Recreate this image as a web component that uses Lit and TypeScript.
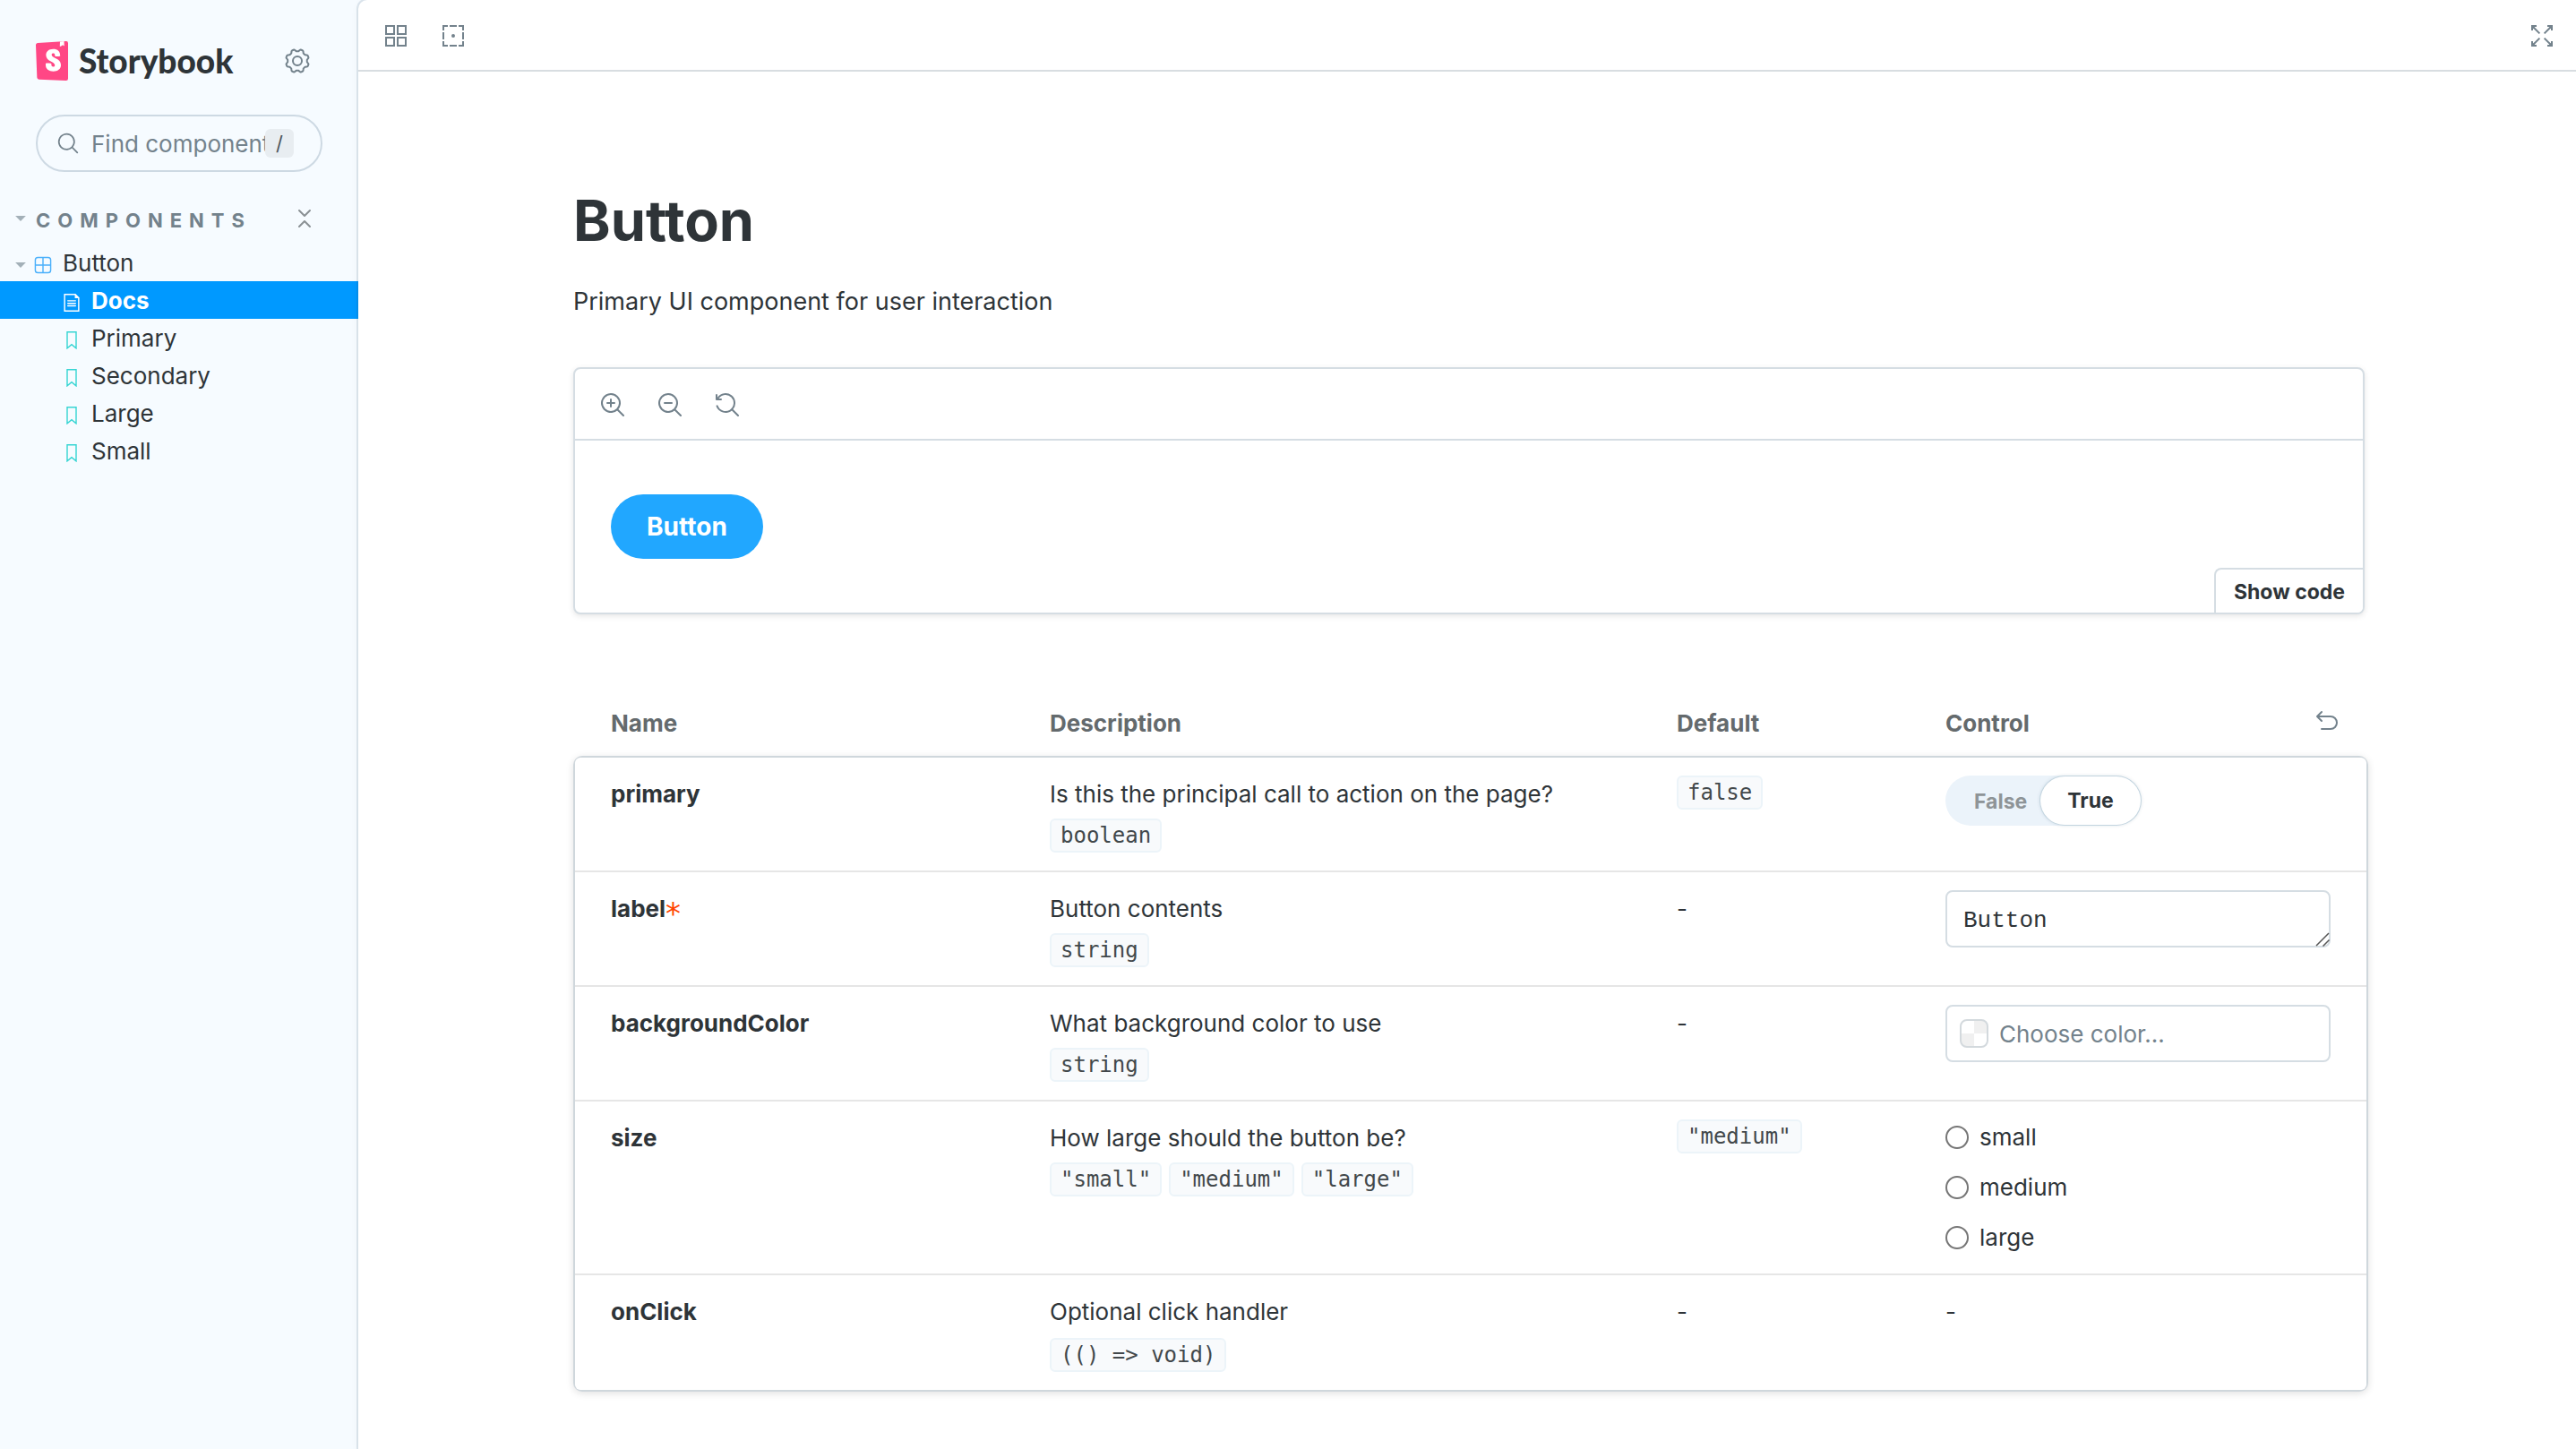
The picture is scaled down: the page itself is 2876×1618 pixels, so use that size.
import { LitElement, html, svg, css } from "lit";
import { customElement, state } from "lit/decorators.js";

const ZOOM_LENS =
  "M9.544 10.206a5.5 5.5 0 11.662-.662.5.5 0 01.148.102l3 3a.5.5 0 01-.708.708l-3-3a.5.5 0 01-.102-.148zM10.5 6a4.5 4.5 0 11-9 0 4.5 4.5 0 019 0z";

/* Eight-toothed cog outline, centred in a 14 unit box. */
const cogPath = (): string => {
  const points: string[] = [];
  for (let i = 0; i < 128; i++) {
    const a = (i / 128) * Math.PI * 2;
    const wave = Math.max(-1, Math.min(1, -Math.cos(a * 8) * 1.7));
    const r = 5.95 + wave * 0.55;
    points.push(`${(7 + r * Math.sin(a)).toFixed(2)} ${(7 - r * Math.cos(a)).toFixed(2)}`);
  }
  return `M${points.join("L")}Z`;
};

const icons = {
  grid: svg`<path fill="none" stroke="currentColor" d="M1.5 1.5H6V6H1.5zM8 1.5h4.5V6H8zM1.5 8H6v4.5H1.5zM8 8h4.5v4.5H8z"/>`,
  outline: svg`<path d="M4 2V1H1v3h1V2h2zM1 9h1V5H1v4zM2 10v2h2v1H1v-3h1zM10 13h3v-3h-1v2h-2v1zM12 4h1V1h-3v1h2v2zM9 12v1H5v-1h4zM9 1v1H5V1h4zM13 9h-1V5h1v4zM8 7a1 1 0 11-2 0 1 1 0 012 0z"/>`,
  expand: svg`<path fill="none" stroke="currentColor" d="M1.5 4V1.5H4M1.5 1.5L5.7 5.7M10 1.5h2.5V4M12.5 1.5L8.3 5.7M1.5 10v2.5H4M1.5 12.5L5.7 8.3M10 12.5h2.5V10M12.5 12.5L8.3 8.3"/><path d="M1 1h3L1 4zM13 1v3l-3-3zM1 13v-3l3 3zM13 13h-3l3-3z"/>`,
  search: svg`<path fill-rule="evenodd" d=${ZOOM_LENS}/>`,
  zoomIn: svg`<path fill-rule="evenodd" d=${ZOOM_LENS}/><path d="M6 3.5a.5.5 0 01.5.5v1.5H8a.5.5 0 010 1H6.5V8a.5.5 0 01-1 0V6.5H4a.5.5 0 010-1h1.5V4a.5.5 0 01.5-.5z"/>`,
  zoomOut: svg`<path fill-rule="evenodd" d=${ZOOM_LENS}/><path d="M4 5.5a.5.5 0 000 1h4a.5.5 0 000-1H4z"/>`,
  zoomReset: svg`<path d="M1.5 2.837V1.5a.5.5 0 00-1 0V4a.5.5 0 00.5.5h2.5a.5.5 0 000-1H2.258a4.5 4.5 0 11-.496 4.016.5.5 0 10-.942.337 5.502 5.502 0 008.724 2.353.5.5 0 00.102.148l3 3a.5.5 0 00.708-.708l-3-3a.5.5 0 00-.148-.102A5.5 5.5 0 101.5 2.837z"/>`,
  undo: svg`<path fill="none" stroke="currentColor" stroke-linecap="round" stroke-linejoin="round" d="M4 2.5L1.5 5L4 7.5M1.5 5H9a3.5 3.5 0 010 7H4"/>`,
  cog: svg`<path fill="none" stroke="currentColor" stroke-linejoin="round" d=${cogPath()}/><circle cx="7" cy="7" r="2.5" fill="none" stroke="currentColor"/>`,
  collapse: svg`<path fill="none" stroke="currentColor" stroke-linecap="round" stroke-linejoin="round" d="M4 2.5l3 3 3-3M4 11.5l3-3 3 3"/>`,
  component: svg`<rect x="1" y="1" width="12" height="12" rx="2" fill="none" stroke="currentColor"/><path fill="none" stroke="currentColor" d="M7 1v12M1 7h12"/>`,
  doc: svg`<path fill="none" stroke="currentColor" d="M1.5.5h8.3l2.7 2.7v10.3h-11z"/><path d="M9.500 0v3.500H13z"/><path fill="none" stroke="currentColor" stroke-linecap="round" d="M4 5.500h6M4 7.500h6M4 9.500h6"/>`,
  bookmark: svg`<path fill="none" stroke="currentColor" d="M3.5.5h7v12.7L7 10.3l-3.500 2.900z"/>`,
};

const icon = (name: keyof typeof icons, extra = "") =>
  html`<svg class="icon ${extra}" viewBox="0 0 14 14" fill="currentColor" aria-hidden="true">${icons[name]}</svg>`;

interface ArgRow {
  name: string;
  required?: boolean;
  description: string;
  types: string[];
  signature?: boolean;
  fallback?: string;
  control?: "boolean" | "text" | "color" | "radio";
}

const ROWS: ArgRow[] = [
  { name: "primary", description: "Is this the principal call to action on the page?", types: ["boolean"], fallback: "false", control: "boolean" },
  { name: "label", required: true, description: "Button contents", types: ["string"], control: "text" },
  { name: "backgroundColor", description: "What background color to use", types: ["string"], control: "color" },
  { name: "size", description: "How large should the button be?", types: ['"small"', '"medium"', '"large"'], fallback: '"medium"', control: "radio" },
  { name: "onClick", description: "Optional click handler", types: ["(() => void)"], signature: true },
];

const base = css`
  * { box-sizing: border-box; }
  button, input, textarea { font: inherit; color: inherit; margin: 0; }
  button { border: 0; padding: 0; background: none; cursor: pointer; }
  .icon { display: block; flex: none; width: 28px; height: 28px; }
  .hidden {
    position: absolute; width: 1px; height: 1px; overflow: hidden;
    clip-path: inset(50%); white-space: nowrap;
  }
`;

@customElement("story-sidebar")
export class StorySidebar extends LitElement {
  static styles = [base, css`
    :host { display: block; background: #f6fbff; }
    .head { display: flex; align-items: center; justify-content: space-between; padding: 46px 54px 0 40px; }
    .brand { display: flex; align-items: center; gap: 12px; color: #2e3438; text-decoration: none; }
    .mark { display: block; width: 36px; height: 44px; }
    .word { font: 900 37px/44px Lato, sans-serif; }
    .gear { color: #73828c; }
    .search {
      display: flex; align-items: center; height: 64px; margin: 38px 40px 0; padding: 0 30px 0 22px;
      border: 2px solid #cdd9e3; border-radius: 32px; color: #73828c;
    }
    .lens { width: 24px; height: 24px; }
    .field { flex: 1; min-width: 0; height: 40px; margin-left: 14px; padding: 2px 0 0; border: 0; outline: 0; background: none; }
    .field::placeholder { color: #73828c; opacity: 1; }
    .key { width: 32px; height: 32px; border-radius: 6px; background: #e8edf1; color: #4c5459; font: 22px/32px Inter, sans-serif; text-align: center; }
    .group { display: flex; align-items: center; justify-content: space-between; height: 40px; margin-top: 34px; padding: 0 46px 0 16px; color: #73828c; }
    .toggle { display: flex; align-items: center; gap: 10px; font-size: 22px; font-weight: 700; letter-spacing: 8px; }
    .toggle .caret { margin-bottom: 4px; }
    .caret { flex: none; width: 14px; height: 6px; background: #a3b0b8; clip-path: polygon(8% 0, 92% 0, 50% 100%); }
    .collapse { margin-bottom: 4px; color: #8a9094; }
    .tree { margin: 6px 0 0; padding: 0; list-style: none; }
    .node {
      display: flex; align-items: center; height: 42px; padding: 2px 0 0 70px;
      color: #2e3438; text-decoration: none;
    }
    .parent { padding-left: 16px; width: 100%; }
    .parent .caret { margin-top: 4px; }
    .kind { width: 20px; height: 20px; margin: 4px 12px 0 0; }
    .parent .kind { margin-left: 8px; color: #4bb0fb; }
    .leaf .kind { color: #37d5d3; }
    .selected { background: #0099ff; color: #fff; font-weight: 700; }
    .selected .icon.kind { color: #fff; }
  `];

  @state() private selected = "Docs";

  private pick(event: Event, name: string) {
    event.preventDefault();
    this.selected = name;
  }

  render() {
    return html`
      <div class="head">
        <a class="brand" href="#">
          <svg class="mark" viewBox="0 0 32 40" preserveAspectRatio="none" aria-hidden="true">
            <path fill="#ff4785" d="M1.200 36.900L0 3.900c0-1.100.8-2 1.900-2.100l28-1.800a2 2 0 012.100 2v36a2 2 0 01-2 2L3.200 38.800a2 2 0 01-2-1.900z"/>
            <path fill="#fff" d="M18.900 15.100c0 .7 4.700.3 5.300-.2 0-4.600-2.500-7-7-7s-7.100 2.500-7.100 6.300c0 6.500 8.800 6.600 8.800 10.200 0 1-.5 1.600-1.600 1.600-1.400 0-2-.7-1.900-3.200 0-.5-5.500-.7-5.600 0-.5 6 3.300 7.800 7.600 7.800 4.200 0 7.500-2.300 7.500-6.300 0-7.200-9.200-7-9.200-10.400 0-1.400 1-1.600 1.700-1.600.6 0 1.700.1 1.500 2.800z"/>
            <path fill="#fff" d="M23.800 5.200L24 .4l4-.3.2 4.900-1.500-1.200-1.900 1.400z"/>
          </svg>
          <span class="word">Storybook</span>
        </a>
        <button class="gear" type="button" aria-label="Settings">${icon("cog")}</button>
      </div>
      <label class="search">
        <span class="hidden">Find components</span>
        ${icon("search", "lens")}
        <input class="field" type="text" placeholder="Find components" />
        <span class="key">/</span>
      </label>
      <div class="group">
        <button class="toggle" type="button"><span class="caret"></span>COMPONENTS</button>
        <button class="collapse" type="button" aria-label="Collapse all">${icon("collapse")}</button>
      </div>
      <ul class="tree">
        <li><button class="node parent" type="button"><span class="caret"></span>${icon("component", "kind")}Button</button></li>
        ${["Docs", "Primary", "Secondary", "Large", "Small"].map(
          (name) => html`<li>
            <a class="node leaf ${name === this.selected ? "selected" : ""}" href="#" @click=${(e: Event) => this.pick(e, name)}>
              ${icon(name === "Docs" ? "doc" : "bookmark", "kind")}${name}
            </a>
          </li>`
        )}
      </ul>
    `;
  }
}

@customElement("story-preview")
export class StoryPreview extends LitElement {
  static styles = [base, css`
    :host { display: block; }
    .card { border: 2px solid #d5dde3; border-radius: 8px; background: #fff; box-shadow: 0 2px 6px rgba(0, 0, 0, 0.1); }
    .tools { display: flex; align-items: center; gap: 36px; height: 80px; padding: 2px 28px 0; border-bottom: 2px solid #d5dde3; color: #73828c; }
    .stage { position: relative; padding: 60px 40px; }
    .demo { display: block; height: 72px; padding: 0 40px; border-radius: 36px; background: #21a7ff; color: #fff; font-size: 28px; font-weight: 700; line-height: 28px; }
    .code {
      position: absolute; right: 0; bottom: 0; padding: 10px 20px 8px 20px; background: #fff;
      border: solid #d5dde3; border-width: 2px 0 0 2px; border-radius: 8px 0 6px 0;
      font-size: 23px; font-weight: 700; line-height: 30px;
    }
  `];

  render() {
    return html`
      <section class="card">
        <div class="tools">
          <button type="button" aria-label="Zoom in">${icon("zoomIn")}</button>
          <button type="button" aria-label="Zoom out">${icon("zoomOut")}</button>
          <button type="button" aria-label="Reset zoom">${icon("zoomReset")}</button>
        </div>
        <div class="stage">
          <button class="demo" type="button">Button</button>
          <button class="code" type="button">Show code</button>
        </div>
      </section>
    `;
  }
}

@customElement("args-table")
export class ArgsTable extends LitElement {
  static styles = [base, css`
    :host { display: block; padding-left: 2px; }
    .wrap { margin-right: -2px; }
    .table { width: 100%; table-layout: fixed; border-collapse: separate; border-spacing: 0; line-height: 42px; }
    .w25 { width: 25%; }
    .w35 { width: 35%; }
    .w15 { width: 15%; }
    th, td { text-align: left; vertical-align: top; }
    .table thead th { height: 60px; padding: 1px 30px 17px; color: #646a6d; font-weight: 700; }
    .table tbody th, .table tbody td { padding: 20px 30px; border-top: 2px solid #e6e6e6; background: #fff; }
    .table tbody tr:first-child > * { border-top: 0; }
    .table tr > :first-child { padding-left: 40px; }
    .table tr > :last-child { padding-right: 40px; }
    .table tbody { border-radius: 8px; box-shadow: 0 0 0 2px #cfd7dc, 0 2px 8px 2px rgba(0, 0, 0, 0.12); }
    .table tbody tr:first-child > :first-child { border-top-left-radius: 6px; }
    .table tbody tr:first-child > :last-child { border-top-right-radius: 6px; }
    .table tbody tr:last-child > :first-child { border-bottom-left-radius: 6px; }
    .table tbody tr:last-child > :last-child { border-bottom-right-radius: 6px; }
    .last { display: flex; align-items: center; justify-content: space-between; }
    .undo { margin: 0 -10px 8px 0; color: #73828c; }
    .star { color: #ff4400; font: 34px/0 "DejaVu Sans", sans-serif; vertical-align: -8px; }
    .types { display: flex; gap: 8px; margin-top: 6px; }
    .signature { margin-top: 8px; }
    .pill {
      display: block; width: max-content; padding: 0 10px; border: 2px solid #ecf4f9; border-radius: 6px;
      background: #f8fafc; color: #42484b; font: 24px/34px "DejaVu Sans Mono", monospace;
    }
    .switch { position: relative; display: flex; width: max-content; height: 56px; border-radius: 28px; background: #ebf3fa; font-size: 23px; font-weight: 700; cursor: pointer; }
    .opt { padding: 2px 15px 0 32px; color: #8e9497; border-radius: 28px; line-height: 54px; }
    .on { margin: 1px 0; padding: 1px 30px 0; background: #fff; color: #2e3438; box-shadow: 0 0 4px rgba(0, 60, 90, 0.2), 0 0 0 1px #d5e3ec; line-height: 53px; }
    .area { position: relative; display: flex; }
    .text {
      display: block; width: 100%; height: 64px; padding: 15px 18px 11px; border: 2px solid #d5dde3; border-radius: 8px;
      background: #fff; font: 26px/34px "Courier", "Liberation Mono", monospace; resize: none; overflow: hidden; outline: 0;
    }
    .grip { position: absolute; right: 1px; bottom: 1px; width: 16px; height: 16px; pointer-events: none; }
    .color { display: flex; align-items: center; gap: 12px; height: 64px; padding: 0 14px; border: 2px solid #d5dde3; border-radius: 8px; background: #fff; }
    .swatch { flex: none; width: 32px; height: 32px; border: 2px solid #d3d9dd; border-radius: 8px; background: conic-gradient(#f0f0f0 25%, #fff 0 50%, #f0f0f0 0 75%, #fff 0); }
    .pick { flex: 1; min-width: 0; height: 40px; padding: 2px 0 0; border: 0; outline: 0; background: none; }
    .pick::placeholder { color: #73828c; opacity: 1; }
    .radios { display: grid; gap: 16px; margin: 0; padding: 0; border: 0; line-height: 40px; }
    .radio { display: flex; align-items: center; gap: 12px; }
    .dot { appearance: none; width: 26px; height: 26px; border: 2px solid #767676; border-radius: 50%; background: #fff; }
    .dot:checked { background: radial-gradient(#029cfd 45%, #fff 50%); }
  `];

  @state() private primary = true;

  private control(row: ArgRow) {
    switch (row.control) {
      case "boolean":
        return html`<label class="switch">
          <input class="hidden" type="checkbox" aria-label=${row.name} .checked=${this.primary}
            @change=${(e: Event) => (this.primary = (e.target as HTMLInputElement).checked)} />
          <span class="opt ${this.primary ? "" : "on"}">False</span>
          <span class="opt ${this.primary ? "on" : ""}">True</span>
        </label>`;
      case "text":
        return html`<div class="area">
          <textarea class="text" rows="1" aria-label=${row.name} .value=${"Button"}></textarea>
          <svg class="grip" viewBox="0 0 16 16" aria-hidden="true"><path d="M1 15L15 1M8.500 15.500l7-7" stroke="#555" stroke-width="1.500"/></svg>
        </div>`;
      case "color":
        return html`<label class="color"><span class="swatch"></span><input class="pick" type="text" aria-label=${row.name} placeholder="Choose color..." /></label>`;
      case "radio":
        return html`<fieldset class="radios" aria-label=${row.name}>
          ${["small", "medium", "large"].map((size) => html`<label class="radio"><input class="dot" type="radio" name="size" value=${size} />${size}</label>`)}
        </fieldset>`;
      default:
        return "-";
    }
  }

  render() {
    return html`
      <div class="wrap">
        <table class="table">
          <colgroup><col class="w25" /><col class="w35" /><col class="w15" /><col class="w25" /></colgroup>
          <thead>
            <tr>
              <th scope="col">Name</th>
              <th scope="col">Description</th>
              <th scope="col">Default</th>
              <th scope="col"><div class="last">Control<button class="undo" type="button" aria-label="Reset controls">${icon("undo")}</button></div></th>
            </tr>
          </thead>
          <tbody>
            ${ROWS.map(
              (row) => html`<tr>
                <th scope="row">${row.name}${row.required ? html`<span class="star">*</span>` : ""}</th>
                <td>${row.description}<div class="types ${row.signature ? "signature" : ""}">${row.types.map((t) => html`<code class="pill">${t}</code>`)}</div></td>
                <td>${row.fallback ? html`<code class="pill">${row.fallback}</code>` : "-"}</td>
                <td>${this.control(row)}</td>
              </tr>`
            )}
          </tbody>
        </table>
      </div>
    `;
  }
}

@customElement("app-root")
export class AppRoot extends LitElement {
  static styles = [base, css`
    :host {
      display: grid; grid-template-columns: 400px minmax(0, 1fr); min-height: 100vh; background: #f6fbff;
      font: 26px/40px Inter, "Liberation Sans", sans-serif; color: #2e3438;
    }
    .main { background: #fff; border-top-left-radius: 10px; box-shadow: 0 0 0 2px rgba(38, 85, 115, 0.12), 0 2px 10px rgba(0, 0, 0, 0.05); clip-path: inset(0 0 0 -10px); }
    .bar { display: flex; align-items: center; gap: 36px; height: 80px; padding: 2px 24px 0 28px; border-bottom: 2px solid #d8dde1; color: #73828c; }
    .grow { flex: 1; }
    .docs { padding: 128px 40px 64px 44px; }
    .page { max-width: 2000px; margin: 0 auto; }
    .title { margin: 0; font-size: 63px; font-weight: 700; line-height: 76px; }
    .lead { margin: 33px 0 53px; font-size: 27px; line-height: 40px; }
    .args { margin-top: 100px; }
  `];

  render() {
    return html`
      <story-sidebar></story-sidebar>
      <main class="main">
        <div class="bar">
          <button type="button" aria-label="Change background">${icon("grid")}</button>
          <button type="button" aria-label="Apply outlines">${icon("outline")}</button>
          <span class="grow"></span>
          <button type="button" aria-label="Go full screen">${icon("expand")}</button>
        </div>
        <div class="docs">
          <div class="page">
            <h1 class="title">Button</h1>
            <p class="lead">Primary UI component for user interaction</p>
            <story-preview></story-preview>
            <args-table class="args"></args-table>
          </div>
        </div>
      </main>
    `;
  }
}
